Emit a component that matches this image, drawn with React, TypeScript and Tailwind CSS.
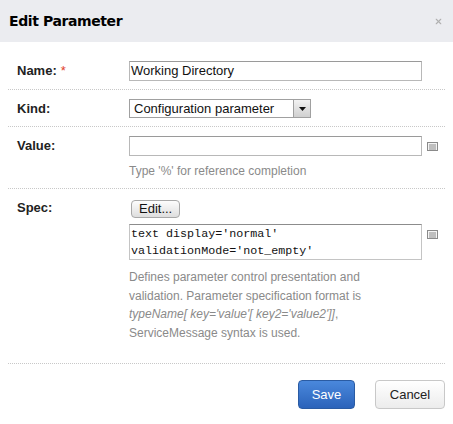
import { X } from "lucide-react";

function NoteIcon() {
  return (
    <svg width="11" height="9" viewBox="0 0 11 9" className="shrink-0" aria-hidden="true">
      <rect x="0.5" y="0.5" width="10" height="8" fill="#f4f4f4" stroke="#8a8a8a" />
      <rect x="2" y="2.5" width="7" height="1" fill="#8a8a8a" />
      <rect x="2" y="4.5" width="7" height="1" fill="#8a8a8a" />
      <rect x="2" y="6.5" width="7" height="1" fill="#8a8a8a" />
    </svg>
  );
}

function Row({ label, required, children, className = "" }: { label: string; required?: boolean; children: React.ReactNode; className?: string }) {
  return (
    <div className={`flex border-b border-dotted border-[#c8c8c8] ${className}`}>
      <div className="w-[121px] shrink-0 pl-[9px] text-[13px] font-bold text-[#222]">
        {label}
        {required && <span className="ml-1 font-normal text-[#e0402a]">*</span>}
      </div>
      <div className="min-w-0 flex-1">{children}</div>
    </div>
  );
}

export default function App() {
  return (
    <div className="h-[424px] w-[453px] bg-white font-['Liberation_Sans',Arial,sans-serif] text-[#222]">
      <div className="flex h-[42px] items-center justify-between bg-[#ebecf0] pl-[9px] pr-[10px]">
        <h1 className="font-['DejaVu_Sans',Verdana,sans-serif] text-[14px] font-bold tracking-[-0.4px] text-black">Edit Parameter</h1>
        <X className="h-[9px] w-[9px] text-[#b0b0b0]" strokeWidth={3} />
      </div>

      <div className="mx-[8px] pt-[10px]">
        <Row label="Name:" required className="pt-[9px] pb-[8px] leading-[20px]">
          <div className="flex h-[20px] w-[293px] items-center border border-[#b8b8b8] border-t-[#9a9a9a] px-[1px] text-[13px] text-[#111]">
            Working Directory
          </div>
        </Row>

        <Row label="Kind:" className="pt-[9px] pb-[8px] leading-[19px]">
          <div className="flex h-[19px] w-[182px] items-center border border-[#a0a0a0] text-[13px] text-[#111]">
            <span className="flex-1 pl-[4px]">Configuration parameter</span>
            <span className="flex h-full w-[17px] items-center justify-center border-l border-[#a0a0a0] bg-gradient-to-b from-[#f2f2f2] to-[#d0d0d0]">
              <svg width="7" height="4" viewBox="0 0 7 4"><path d="M0 0h7L3.5 4z" fill="#111" /></svg>
            </span>
          </div>
        </Row>

        <Row label="Value:" className="pt-[9px] pb-[10px] leading-[20px]">
          <div className="flex items-center gap-[5px]">
            <div className="h-[20px] w-[293px] border border-[#b8b8b8] border-t-[#9a9a9a]" />
            <NoteIcon />
          </div>
          <div className="mt-[8px] text-[12px] leading-[14px] text-[#8a8a8a]">Type '%' for reference completion</div>
        </Row>

        <Row label="Spec:" className="pt-[10px] pb-[21px] leading-[18px]">
          <button className="ml-[2px] h-[18px] rounded-[4px] border border-[#a8a8a8] bg-gradient-to-b from-[#fdfdfd] to-[#dedede] px-[7px] text-[13px] leading-[16px] text-[#111]">
            Edit...
          </button>
          <div className="mt-[6px] flex items-start gap-[5px]">
            <div className="h-[36px] w-[293px] border border-[#c4c4c4] border-t-[#8c8c8c] pl-[1px] pt-[1px] font-['Liberation_Mono','Courier_New',monospace] text-[11.7px] leading-[17px] text-[#111]">
              text display='normal'<br />validationMode='not_empty'
            </div>
            <div className="pt-[6px]"><NoteIcon /></div>
          </div>
          <p className="mt-[8px] text-[12px] leading-[18.5px] text-[#8a8a8a]">
            Defines parameter control presentation and<br />
            validation. Parameter specification format is<br />
            <i>typeName[ key='value'[ key2='value2']]</i>,<br />
            ServiceMessage syntax is used.
          </p>
        </Row>

        <div className="flex justify-end gap-[20px] pt-[16px]">
          <button className="h-[29px] w-[57px] rounded-[4px] border border-[#2a5ba3] bg-gradient-to-b from-[#4a88dc] to-[#2b63ba] text-[13px] text-white">
            Save
          </button>
          <button className="h-[29px] w-[70px] rounded-[4px] border border-[#c8c8c8] bg-gradient-to-b from-white to-[#ececec] text-[13px] text-[#222]">
            Cancel
          </button>
        </div>
      </div>
    </div>
  );
}
